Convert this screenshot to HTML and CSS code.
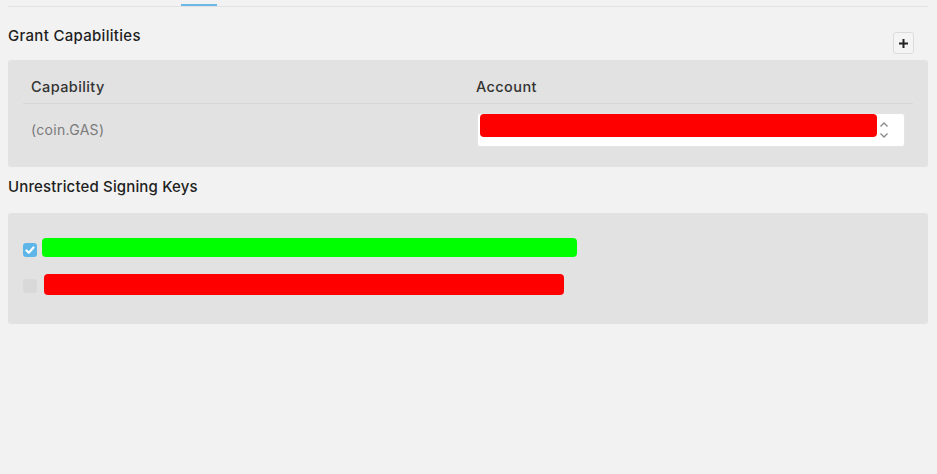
FILE: index.html
```html
<!DOCTYPE html>
<html>
<head>
<meta charset="utf-8">
<link rel="stylesheet" href="styles.css">
</head>
<body>
<div class="tabs"><div class="tab-indicator"></div></div>

<div class="section-head">
  <h2 class="title">Grant Capabilities</h2>
  <button class="add-btn" aria-label="Add">
    <svg width="11" height="11" viewBox="0 0 11 11"><path d="M5.5 1v9M1 5.5h9" stroke="#222" stroke-width="2" fill="none"/></svg>
  </button>
</div>

<div class="panel cap-panel">
  <div class="table">
    <div class="thead">
      <div class="cell th">Capability</div>
      <div class="cell th">Account</div>
    </div>
    <div class="trow">
      <div class="cell td muted">(coin.GAS)</div>
      <div class="cell td">
        <div class="select">
          <span class="redact red sel-redact"></span>
          <svg class="chev" width="10" height="18" viewBox="0 0 10 18"><path d="M1.5 5.5L5 2l3.5 3.5M1.5 12.5L5 16l3.5-3.5" stroke="#8a8a8a" stroke-width="1.4" fill="none"/></svg>
        </div>
      </div>
    </div>
  </div>
</div>

<div class="section-head2">
  <h2 class="title title2">Unrestricted Signing Keys</h2>
</div>

<div class="panel keys-panel">
  <div class="key-row row1">
    <span class="check checked">
      <svg width="10" height="10" viewBox="0 0 10 10"><path d="M1.5 5.5l2.3 2.3L8.5 2.5" stroke="#fff" stroke-width="2.2" fill="none" stroke-linecap="round" stroke-linejoin="round"/></svg>
    </span>
    <span class="redact green key1"></span>
  </div>
  <div class="key-row row2">
    <span class="check"></span>
    <span class="redact red key2"></span>
  </div>
</div>
</body>
</html>
```

FILE: styles.css
```css
* { box-sizing: border-box; }
html, body { margin: 0; }
body {
  background: #f2f2f2;
  padding: 0 9px 0 8px;
  font-family: Inter, "Noto Sans", sans-serif;
  color: #222;
  width: 937px;
  height: 474px;
  overflow: hidden;
}
.tabs {
  height: 7px;
  border-bottom: 1px solid #e2e2e2;
  display: flex;
  align-items: flex-end;
  padding-left: 173px;
}
.tab-indicator {
  width: 36px;
  height: 2px;
  background: #6cb8e6;
}
.section-head {
  display: flex;
  justify-content: space-between;
  align-items: flex-start;
  padding-top: 19px;
}
.title {
  margin: 0;
  font-size: 15px;
  line-height: 20px;
  font-weight: 500;
  letter-spacing: 0.3px;
  color: #1e1e1e;
}
.title2 { letter-spacing: 0.15px; }
.add-btn {
  margin: 6px 14px 6px 0;
  width: 21px;
  height: 22px;
  padding: 0;
  border: 1px solid #dcdcdc;
  border-radius: 3px;
  background: #f4f4f4;
  display: flex;
  align-items: center;
  justify-content: center;
}
.panel {
  background: #e2e2e2;
  border-radius: 3px;
}
.cap-panel {
  height: 107px;
  padding: 12px 15px 0 15px;
}
.thead, .trow { display: grid; grid-template-columns: 1fr 1fr; }
.thead { border-bottom: 1px solid #d7d7d7; height: 32px; }
.cell { padding: 0 8px; display: flex; align-items: center; }
.th { font-size: 14.5px; font-weight: 500; color: #333; padding-bottom: 2px; letter-spacing: 0.4px; }
.trow { padding-top: 9px; }
.td { font-size: 14px; letter-spacing: 0.3px; }
.td + .td { padding: 0 8px 0 9px; }
.muted { color: #7a7a7a; padding-bottom: 2px; }
.select {
  width: 100%;
  height: 34px;
  background: #fff;
  border: 1px solid #e4e4e4;
  border-radius: 3px;
  display: flex;
  align-items: flex-start;
  padding: 0 0 0 2px;
}
.redact { display: block; border-radius: 4px; }
.red { background: #ff0000; }
.green { background: #00ff00; }
.sel-redact { width: 397px; height: 23px; margin-top: 0; }
.chev { margin: 7px 0 0 2px; }
.section-head2 { padding-top: 10px; height: 46px; }
.keys-panel {
  height: 111px;
  padding: 25px 15px 0 15px;
}
.key-row { display: flex; align-items: center; }
.row1 { height: 19px; gap: 5px; }
.row2 { height: 21px; gap: 7px; margin-top: 17px; }
.check {
  width: 14px;
  height: 14px;
  border-radius: 3px;
  background: #d9d9d9;
  display: flex;
  align-items: center;
  justify-content: center;
}
.row1 .check { margin-top: 5px; }
.row2 .check { margin-top: 3px; }
.check.checked { background: #5db5e8; }
.key1 { width: 535px; height: 19px; }
.key2 { width: 520px; height: 21px; }
```
